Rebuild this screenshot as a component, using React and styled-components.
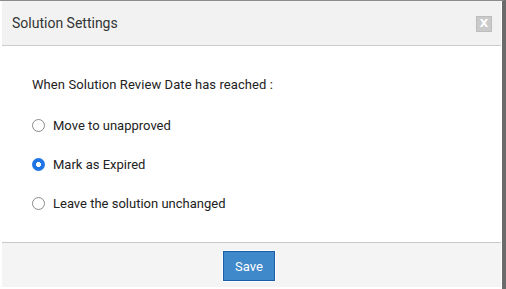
import React, { useState } from "react";
import styled, { createGlobalStyle } from "styled-components";

const GlobalStyle = createGlobalStyle`
  html, body {
    margin: 0;
    padding: 0;
    background: #ffffff;
  }
  body {
    font-family: Roboto, "Liberation Sans", Arial, sans-serif;
  }
`;

const Frame = styled.div`
  width: 506px;
  height: 289px;
  box-sizing: border-box;
  border-top: 1px solid #8c8c8c;
  border-right: 4px solid #6b6b6b;
  padding: 0 1px 2px 2px;
  background: #ffffff;
  display: flex;
  flex-direction: column;
`;

const Header = styled.div`
  height: 44px;
  flex: none;
  background: #f2f2f2;
  border-bottom: 1px solid #cdcdcd;
  display: flex;
  align-items: center;
  justify-content: space-between;
  padding: 0 9px 0 10px;
`;

const Title = styled.h3`
  margin: 0;
  font-size: 14px;
  font-weight: 400;
  color: #333333;
`;

const CloseButton = styled.button`
  width: 16px;
  height: 16px;
  padding: 0;
  box-sizing: border-box;
  border: 1px solid #bdbdbd;
  background: #cacaca;
  color: #ffffff;
  font-family: "DejaVu Sans", sans-serif;
  font-size: 11px;
  font-weight: 700;
  line-height: 14px;
  text-align: center;
  cursor: pointer;
  margin-top: 1px;
`;

const Body = styled.div`
  flex: 1;
  padding: 29px 0 0 30px;
  display: flex;
  flex-direction: column;
  gap: 19px;
`;

const Prompt = styled.p`
  margin: 0 0 1px;
  font-size: 13px;
  line-height: 20px;
  color: #222222;
  letter-spacing: 0.08px;
`;

const Option = styled.label`
  display: flex;
  align-items: center;
  gap: 8px;
  height: 20px;
  font-size: 13px;
  color: #222222;
  cursor: pointer;
`;

const Radio = styled.input.attrs({ type: "radio" })`
  appearance: none;
  margin: 0;
  width: 13px;
  height: 13px;
  box-sizing: border-box;
  border-radius: 50%;
  border: 1px solid #8a8a8a;
  background: #ffffff;
  flex: none;

  &:checked {
    border: none;
    background: radial-gradient(circle, #ffffff 0 2.2px, #1f74e6 2.7px);
  }
`;

const Footer = styled.div`
  height: 44px;
  flex: none;
  background: #f4f4f4;
  border-top: 1px solid #c8c8c8;
  display: flex;
  align-items: center;
  justify-content: center;
  padding-right: 5px;
`;

const SaveButton = styled.button`
  width: 52px;
  height: 30px;
  box-sizing: border-box;
  border: 1px solid #1b5ea8;
  box-shadow: 0 0 0 1px #ffffff;
  background: #3f88ca;
  color: #ffffff;
  font-family: Roboto, "Liberation Sans", sans-serif;
  font-size: 13px;
  cursor: pointer;
  margin-top: 2px;
`;

const options = [
  { id: "unapproved", label: "Move to unapproved" },
  { id: "expired", label: "Mark as Expired" },
  { id: "unchanged", label: "Leave the solution unchanged" }
];

export default function App() {
  const [choice, setChoice] = useState("expired");

  return (
    <>
      <GlobalStyle />
      <Frame>
        <Header>
          <Title>Solution Settings</Title>
          <CloseButton aria-label="Close">X</CloseButton>
        </Header>
        <Body>
          <Prompt>When Solution Review Date has reached :</Prompt>
          {options.map(o => (
            <Option key={o.id}>
              <Radio
                name="review"
                checked={choice === o.id}
                onChange={() => setChoice(o.id)}
              />
              {o.label}
            </Option>
          ))}
        </Body>
        <Footer>
          <SaveButton type="button">Save</SaveButton>
        </Footer>
      </Frame>
    </>
  );
}
